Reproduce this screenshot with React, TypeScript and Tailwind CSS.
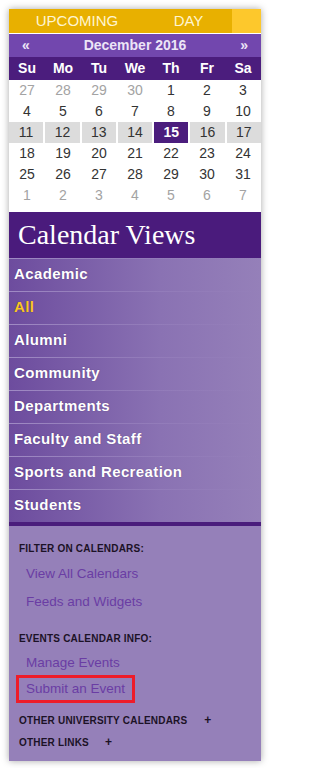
import React from "react";

const weekdays = ["Su", "Mo", "Tu", "We", "Th", "Fr", "Sa"];

// each row of the month grid: [day, faded?]
const weeks: [number, boolean][][] = [
  [[27, true], [28, true], [29, true], [30, true], [1, false], [2, false], [3, false]],
  [[4, false], [5, false], [6, false], [7, false], [8, false], [9, false], [10, false]],
  [[11, false], [12, false], [13, false], [14, false], [15, false], [16, false], [17, false]],
  [[18, false], [19, false], [20, false], [21, false], [22, false], [23, false], [24, false]],
  [[25, false], [26, false], [27, false], [28, false], [29, false], [30, false], [31, false]],
  [[1, true], [2, true], [3, true], [4, true], [5, true], [6, true], [7, true]],
];

const views = [
  "Academic",
  "All",
  "Alumni",
  "Community",
  "Departments",
  "Faculty and Staff",
  "Sports and Recreation",
  "Students",
];

function MiniCalendar() {
  return (
    <div className="bg-white pb-[6px]">
      <div className="flex h-[23px] items-center justify-between bg-[#7247ae] px-[13px] text-[14px] font-bold text-[#ece4f7]">
        <span>«</span>
        <span>December 2016</span>
        <span>»</span>
      </div>
      <div className="grid h-[23px] grid-cols-7 items-center bg-[#4b1d7d] text-center text-[14px] font-bold text-white">
        {weekdays.map((d) => (
          <span key={d}>{d}</span>
        ))}
      </div>
      {weeks.map((week, i) => {
        const current = i === 2;
        return (
          <div key={i} className={`grid h-[21px] grid-cols-7 text-[14px] ${current ? "gap-x-[2px]" : ""}`}>
            {week.map(([day, faded]) => {
              const today = current && day === 15;
              return (
                <span
                  key={day}
                  className={`flex items-center justify-center ${
                    today
                      ? "bg-[#4b1d7d] font-bold text-white"
                      : current
                      ? "bg-[#dcdcdc] text-[#333]"
                      : faded
                      ? "text-[#a3a3a3]"
                      : "text-[#333]"
                  }`}
                >
                  {day}
                </span>
              );
            })}
          </div>
        );
      })}
    </div>
  );
}

function ViewList() {
  return (
    <div className="border-b-4 border-[#4a1d7c]">
      {views.map((v) => (
        <div
          key={v}
          className="relative flex h-[33px] items-center bg-gradient-to-r from-[#6d4c9e] via-[#8a72b3] via-60% to-[#9580b9] px-[5px]"
        >
          <div className="absolute left-0 right-0 top-0 h-px bg-gradient-to-r from-[#a08bc4] to-transparent" />
          <span
            className={`text-[15px] font-bold tracking-[0.4px] [text-shadow:0_0_1px_rgba(40,10,70,0.5)] ${
              v === "All" ? "text-[#fac622]" : "text-white"
            }`}
          >
            {v}
          </span>
        </div>
      ))}
    </div>
  );
}

function InfoSection() {
  const label = "text-[10px] leading-[12px] font-bold tracking-[0.2px] text-[#1c1226]";
  const link = "text-[13.5px] leading-[16px] text-[#6a3da4]";
  return (
    <div className="bg-[#9580b9] px-[10px] pb-[12px] pt-[17px]">
      <p className={label}>FILTER ON CALENDARS:</p>
      <div className={`mt-[11px] flex flex-col gap-[12px] pl-[7px] ${link}`}>
        <span>View All Calendars</span>
        <span>Feeds and Widgets</span>
      </div>
      <p className={`mt-[23px] ${label}`}>EVENTS CALENDAR INFO:</p>
      <div className={`mt-[10px] flex flex-col items-start pl-[7px] ${link}`}>
        <span>Manage Events</span>
        <span className="-ml-[10px] mt-[4px] border-[3px] border-[#ee1c2a] px-[7px] py-[3px]">
          Submit an Event
        </span>
      </div>
      <p className={`mt-[11px] ${label}`}>
        OTHER UNIVERSITY CALENDARS <span className="ml-[14px] text-[12px]">+</span>
      </p>
      <p className={`mt-[9px] ${label}`}>
        OTHER LINKS <span className="ml-[13px] text-[12px]">+</span>
      </p>
    </div>
  );
}

export default function App() {
  return (
    <div className="min-h-screen bg-white pl-[9px] pr-[8px] pt-[9px] font-['Liberation_Sans',Arial,sans-serif]">
      <div className="w-[252px] shadow-[0_0_7px_rgba(0,0,0,0.35)]">
        {/* top tabs */}
        <div className="flex h-[25px] border-b border-white">
          <div className="flex flex-1 items-center bg-[#e8b000] text-[15px] text-[#fff5d0]">
            <span className="w-[136px] text-center">UPCOMING</span>
            <span className="flex-1 text-center">DAY</span>
          </div>
          <div className="w-[29px] bg-[#fdc82c]" />
        </div>

        <MiniCalendar />

        <div className="flex h-[46px] items-center bg-[#4a1b7c] px-[9px]">
          <h2 className="font-['Liberation_Serif',Georgia,serif] text-[28px] text-white">Calendar Views</h2>
        </div>

        <ViewList />
        <InfoSection />
      </div>
    </div>
  );
}
